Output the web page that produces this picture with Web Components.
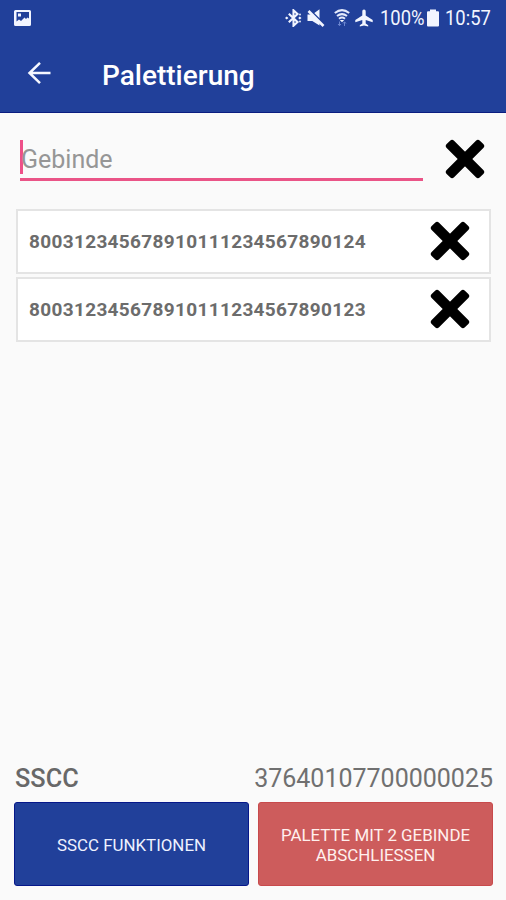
<!DOCTYPE html>
<html lang="de">
<head>
<meta charset="utf-8">
<title>Palettierung</title>
<style>
  html, body { margin: 0; height: 100%; }
  body { font-family: Roboto, "Noto Sans", sans-serif; background: #fafafa; overflow: hidden; }
</style>
</head>
<body>
<pallet-screen></pallet-screen>

<script>
// ===== <status-bar> =====
class StatusBar extends HTMLElement {
  constructor() {
    super();
    this.attachShadow({ mode: 'open' });
  }

  connectedCallback() {
    this.shadowRoot.innerHTML = `
      <style>
        :host {
          display: flex;
          align-items: center;
          height: 36px;
          box-sizing: border-box;
          padding: 0 14px;
          background: #21409a;
          color: #f2f5ff;
          font-size: 20px;
        }
        svg { display: block; flex: none; fill: #f2f5ff; }
        .space { flex: 1; }
        .text { display: block; white-space: nowrap; }
        .battery-text { width: 45px; margin-left: 7px; }
        .time { width: 47px; margin-left: 6px; }
        .text span { display: inline-block; transform: scaleX(.92); transform-origin: 0 50%; }
      </style>
      <svg width="18" height="18" viewBox="0 0 18 18"><path fill-rule="evenodd" d="M1.5 1h14a1.500 1.500 0 0 1 1.500 1.500v13a1.500 1.500 0 0 1-1.500 1.500h-14A1.500 1.500 0 0 1 0 15.500v-13A1.500 1.500 0 0 1 1.500 1zM2.500 3v9.500l2.500-2 2 1.500 3.500-3.500 1.500 1.500 1.500-1.500 1.500 1V3zM4 4.500h3v3H4z"/></svg>
      <span class="space"></span>
      <svg width="17" height="18" viewBox="0 0 17 18"><path d="M3.800 4.700l8.700 8.300-4 3.700V1.300l4 3.700-8.700 8.300" fill="none" stroke="#f2f5ff" stroke-width="2.100"/><path d="M0 9l1.700-1.600L3.400 9l-1.700 1.600zM13.200 9l1.600-1.600L16.500 9l-1.700 1.600z"/><circle cx="15" cy="5.500" r=".9"/><circle cx="15" cy="12.500" r=".9"/></svg>
      <svg width="18" height="18" viewBox="0 0 18 18" style="margin-left:5px"><path d="M.5 5.500h4.800L12.500.3v16.200l-7.200-4.600H.5z"/><path d="M2 0l16 16" stroke="#21409a" stroke-width="1.800"/><path d="M1.500 2l15 15" stroke="#f2f5ff" stroke-width="2.600"/></svg>
      <svg width="16" height="18" viewBox="0 0 16 18" style="margin-left:9px"><path d="M.8 4Q8-1.800 15.200 4M3 7q5-3.800 10 0M5 9.700q3-2.200 6 0" fill="none" stroke="#e3e9fb" stroke-width="2"/><path d="M5.800 11h4.400L8 13.300z"/><path d="M5.500 12.500v4m-1.500-1.500l1.500 1.700L7 15M10.500 17v-4M9 14.500l1.500-1.700 1.500 1.700" fill="none" stroke="#6c86cf"/></svg>
      <svg width="18" height="18" viewBox="0 0 18 18" style="margin-left:5px"><path d="M9 .5c1.100 0 1.700.8 1.700 2v4L17.700 11v2.200l-7-2.200v3.500l2.500 1.700v1.300L9 16.500l-4.200 1v-1.300l2.500-1.700V11l-7 2.200V11l7-4.500v-4c0-1.200.6-2 1.700-2z"/></svg>
      <span class="text battery-text"><span>100%</span></span>
      <svg width="12" height="18" viewBox="0 0 12 18" style="margin-left:2px"><path d="M3 .5h6v1.700h2a1 1 0 0 1 1 1v13.300a1 1 0 0 1-1 1H1a1 1 0 0 1-1-1V3.200a1 1 0 0 1 1-1h2z"/></svg>
      <span class="text time"><span>10:57</span></span>
    `;
  }
}
customElements.define('status-bar', StatusBar);

// ===== <app-bar> =====
class AppBar extends HTMLElement {
  constructor() {
    super();
    this.attachShadow({ mode: 'open' });
  }

  connectedCallback() {
    this.shadowRoot.innerHTML = `
      <style>
        :host {
          display: flex;
          align-items: center;
          height: 77px;
          box-sizing: border-box;
          padding: 0 28px 2px 27px;
          background: #21409a;
          border-bottom: 1px solid #0a1d80;
          color: #fff;
        }
        svg { display: block; margin-right: 51px; }
        h1 { margin: 5px 0 0; font-size: 28px; font-weight: 500; line-height: 32px; }
      </style>
      <svg width="24" height="24" viewBox="0 0 24 24" fill="none" stroke="#f5f7ff" stroke-width="2.500"><path d="M23.500 12H3M13 1.800L2.500 12 13 22.200"/></svg>
      <h1><slot></slot></h1>
    `;
  }
}
customElements.define('app-bar', AppBar);

// ===== <clear-button> =====
class ClearButton extends HTMLElement {
  constructor() {
    super();
    this.attachShadow({ mode: 'open' });
  }

  connectedCallback() {
    this.shadowRoot.innerHTML = `
      <style>
        :host { display: block; flex: none; width: 40px; height: 40px; }
        button { display: block; padding: 0; border: 0; background: none; }
        svg { display: block; }
      </style>
      <button aria-label="Löschen">
        <svg width="40" height="40" viewBox="0 0 40 40">
          <rect x="-3.500" y="14.800" width="47" height="10.400" rx="2.800" transform="rotate(45 20 20)"/>
          <rect x="-3.500" y="14.800" width="47" height="10.400" rx="2.800" transform="rotate(-45 20 20)"/>
        </svg>
      </button>
    `;
  }
}
customElements.define('clear-button', ClearButton);

// ===== <scan-field> =====
class ScanField extends HTMLElement {
  constructor() {
    super();
    this.attachShadow({ mode: 'open' });
  }

  connectedCallback() {
    this.shadowRoot.innerHTML = `
      <style>
        :host { display: flex; align-items: flex-start; padding: 26px 21px 0 20px; height: 70px; }
        .input {
          display: flex;
          align-items: center;
          width: 403px;
          height: 42px;
          box-sizing: border-box;
          border-bottom: 3px solid #ea5487;
          color: #969696;
          font-size: 25px;
          margin-right: 22px;
        }
        .caret { width: 3px; height: 34px; background: #ee5088; margin: -4px -2px 0 0; }
        .hint { margin-top: 2px; }
      </style>
      <div class="input"><span class="caret"></span><span class="hint"><slot></slot></span></div>
      <clear-button></clear-button>
    `;
  }
}
customElements.define('scan-field', ScanField);

// ===== <code-row> =====
class CodeRow extends HTMLElement {
  constructor() {
    super();
    this.attachShadow({ mode: 'open' });
  }

  connectedCallback() {
    this.shadowRoot.innerHTML = `
      <style>
        :host {
          display: flex;
          align-items: center;
          justify-content: space-between;
          height: 65px;
          box-sizing: border-box;
          padding: 0 19px 1px 11px;
          background: #fff;
          border: 2px solid #e4e4e4;
          color: #6c6c6c;
          font-size: 19px;
          font-weight: 700;
          letter-spacing: .33px;
        }
        span { margin-top: 1px; }
      </style>
      <span><slot></slot></span>
      <clear-button></clear-button>
    `;
  }
}
customElements.define('code-row', CodeRow);

// ===== <action-button> =====
class ActionButton extends HTMLElement {
  constructor() {
    super();
    this.attachShadow({ mode: 'open' });
  }

  connectedCallback() {
    this.shadowRoot.innerHTML = `
      <style>
        :host { display: block; height: 84px; }
        button {
          width: 100%;
          height: 100%;
          padding: 1px 16px 0;
          border: 1px solid #06178a;
          border-radius: 3px;
          background: #21409a;
          color: #eef2ff;
          font: 400 16.900px/20px Roboto, "Noto Sans", sans-serif;
          text-transform: uppercase;
        }
        :host([kind="finish"]) button { background: #cd5c5c; border-color: #c84a4c; color: #fff0ee; }
      </style>
      <button><slot></slot></button>
    `;
  }
}
customElements.define('action-button', ActionButton);

// ===== <pallet-screen> =====
class PalletScreen extends HTMLElement {
  constructor() {
    super();
    this.attachShadow({ mode: 'open' });
  }

  connectedCallback() {
    this.shadowRoot.innerHTML = `
      <style>
        :host { display: flex; flex-direction: column; width: 506px; height: 900px; background: #fafafa; }
        .list { flex: 1; display: flex; flex-direction: column; gap: 3px; padding: 0 15px 0 16px; }
        .sscc {
          display: flex;
          justify-content: space-between;
          align-items: center;
          height: 30px;
          padding: 0 13px 0 15px;
          margin-bottom: 9px;
          color: #707070;
          font-size: 25px;
        }
        .sscc b { font-weight: 500; font-size: 25.300px; color: #686868; }
        .actions { display: grid; grid-template-columns: 1fr 1fr; gap: 9px; padding: 0 13px 14px 14px; }
      </style>
      <status-bar></status-bar>
      <app-bar>Palettierung</app-bar>
      <scan-field>Gebinde</scan-field>
      <div class="list">
        <code-row>800312345678910111234567890124</code-row>
        <code-row>800312345678910111234567890123</code-row>
      </div>
      <div class="sscc"><b>SSCC</b><span>37640107700000025</span></div>
      <div class="actions">
        <action-button>SSCC Funktionen</action-button>
        <action-button kind="finish">Palette mit 2 Gebinde abschliessen</action-button>
      </div>
    `;
  }
}
customElements.define('pallet-screen', PalletScreen);
</script>
</body>
</html>
